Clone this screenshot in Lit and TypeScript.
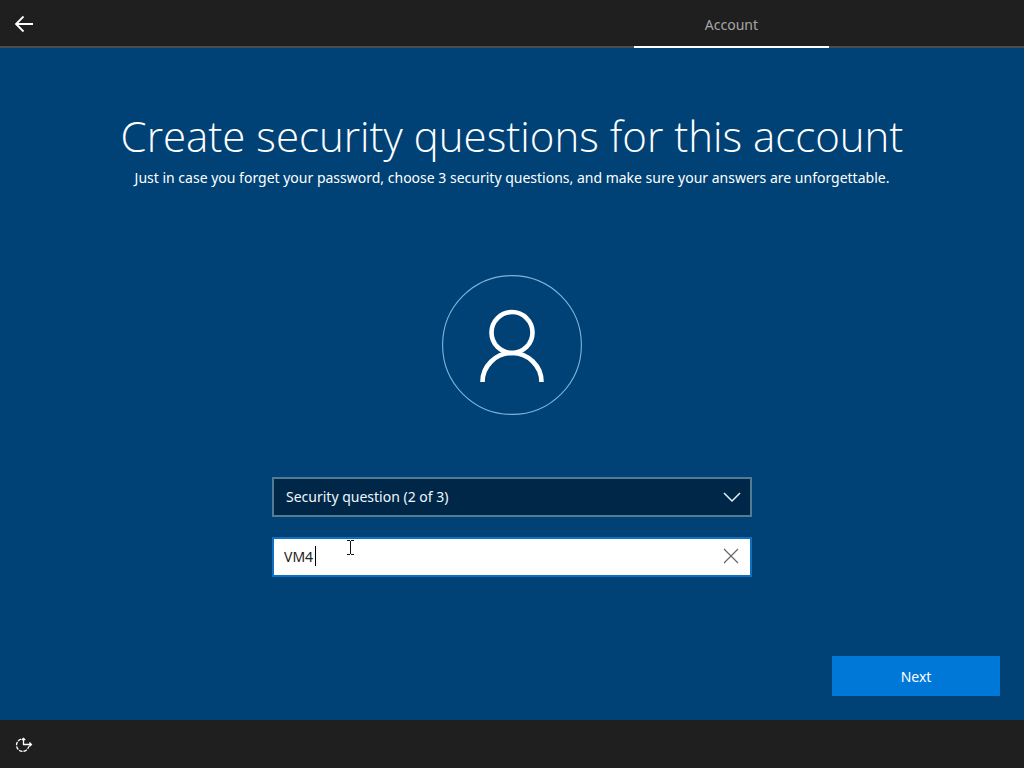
import { LitElement, html, css, svg } from "lit";
import { customElement, state } from "lit/decorators.js";

const backIcon = svg`<svg class="icon" width="20" height="20" viewBox="0 0 20 20" aria-hidden="true">
  <path d="M19 10H2M9.5 2.5L2 10l7.5 7.5" fill="none" stroke="#fff" stroke-width="1.8"/></svg>`;

const personIcon = svg`<svg class="icon" width="140" height="140" viewBox="0 0 140 140" role="img" aria-label="User account">
  <circle cx="70" cy="70" r="69.4" fill="none" stroke="#7fb4dc" stroke-width="1.1"/>
  <g fill="none" stroke="#fff" stroke-width="4.6">
    <circle cx="70" cy="57.5" r="20.5"/>
    <path d="M40.5 107a29.5 29 0 0 1 59 0"/>
  </g></svg>`;

const chevronIcon = svg`<svg class="chevron" width="18" height="12" viewBox="0 0 18 12" aria-hidden="true">
  <path d="M1 2l8 8 8-8" fill="none" stroke="#e4f2fa" stroke-width="1.5"/></svg>`;

const clearIcon = svg`<svg class="icon" width="16" height="16" viewBox="0 0 16 16" aria-hidden="true">
  <path d="M1 1l14 14M15 1l-14 14" fill="none" stroke="#666" stroke-width="1.2"/></svg>`;

const easeIcon = svg`<svg class="icon" width="18" height="18" viewBox="0 0 18 18" aria-hidden="true">
  <g fill="none" stroke="#fff" stroke-width="1.3">
    <path d="M6.2 4.1A6.2 6.2 0 1 0 13.8 11.3" stroke-dasharray="3.6 1"/>
    <path d="M8.5 10V3.5M6.8 5l1.7-1.7L10.2 5M8 9.5H16.4M14.4 7.5l2 2-2 2"/>
  </g></svg>`;

const pointerIcon = svg`<svg class="pointer" width="9" height="17" viewBox="0 0 9 17" aria-hidden="true">
  <path d="M1 1.5h3M5 1.5h3M4.5 2v13M1 15.5h3M5 15.5h3" fill="none" stroke="#111" stroke-width="1"/></svg>`;

@customElement("app-root")
export class AppRoot extends LitElement {
  @state() private answer = "VM4";

  static styles = css`
    :host {
      display: flex;
      flex-direction: column;
      min-height: 100vh;
      background: #004275;
      color: #fff;
      font-family: "Segoe UI", "Noto Sans", "Open Sans", sans-serif;
      font-size: 14px;
      line-height: 20px;
    }
    * { box-sizing: border-box; }
    button, input, select {
      font: inherit;
      color: inherit;
      border: 0;
      border-radius: 0;
      margin: 0;
      padding: 0;
      background: none;
      outline: none;
    }
    .icon { display: block; }
    .top {
      display: grid;
      grid-template-columns: 3.25fr 1fr 1fr;
      height: 48px;
      background: #1f1f1f;
      box-shadow: inset 0 -2px #4c4c4c;
    }
    .back {
      justify-self: start;
      width: 48px;
      height: 48px;
      display: grid;
      place-items: center;
    }
    .tab {
      display: grid;
      place-items: center;
      padding-top: 4px;
      border-bottom: 2px solid #fff;
      color: #a6a6a6;
      text-decoration: none;
    }
    main {
      flex: 1;
      display: flex;
      flex-direction: column;
      align-items: center;
      padding: 56px 24px 24px;
    }
    h1 {
      margin: 0;
      font-family: "Segoe UI", "Open Sans", sans-serif;
      font-size: 42px;
      line-height: 64px;
      font-weight: 300;
      text-align: center;
    }
    .lead { margin: 0; text-align: center; }
    .avatar { margin: 87px 0 62px; }
    form {
      flex: 1;
      width: 100%;
      display: flex;
      flex-direction: column;
      align-items: center;
      gap: 20px;
    }
    .field {
      position: relative;
      width: 100%;
      max-width: 480px;
      height: 40px;
    }
    .question {
      appearance: none;
      width: 100%;
      height: 100%;
      padding: 0 40px 0 12px;
      border: 2px solid #527b94;
      background: #002748;
      color: #eef8fd;
    }
    .chevron {
      position: absolute;
      right: 11px;
      top: 14px;
      pointer-events: none;
    }
    .answer {
      width: 100%;
      height: 100%;
      padding: 0 40px 2px 10px;
      border: 2px solid #0f6fc0;
      background: #fff;
      color: #222;
    }
    .clear {
      position: absolute;
      right: 2px;
      top: 2px;
      width: 38px;
      height: 34px;
      display: grid;
      place-items: center;
    }
    .caret {
      position: absolute;
      left: 43px;
      top: 9px;
      width: 1px;
      height: 20px;
      background: #000;
    }
    .pointer {
      position: absolute;
      left: 74px;
      top: 2px;
      pointer-events: none;
    }
    .next {
      align-self: flex-end;
      margin-top: auto;
      width: 168px;
      height: 40px;
      padding-top: 2px;
      background: #0078d7;
    }
    footer {
      height: 48px;
      background: #1f1f1f;
    }
    .ease {
      width: 48px;
      height: 48px;
      display: grid;
      place-items: center;
    }
  `;

  render() {
    return html`
      <header class="top">
        <button class="back" type="button" aria-label="Back">${backIcon}</button>
        <a class="tab" href="#account" aria-current="step">Account</a>
      </header>
      <main>
        <h1>Create security questions for this account</h1>
        <p class="lead">Just in case you forget your password, choose 3 security questions, and make sure your answers are unforgettable.</p>
        <div class="avatar">${personIcon}</div>
        <form @submit=${(e: Event) => e.preventDefault()}>
          <div class="field">
            <select class="question" aria-label="Security question">
              <option>Security question (2 of 3)</option>
            </select>
            ${chevronIcon}
          </div>
          <div class="field">
            <input class="answer" type="text" aria-label="Your answer" .value=${this.answer}
              @input=${(e: Event) => { this.answer = (e.target as HTMLInputElement).value; }} />
            <span class="caret"></span>
            ${pointerIcon}
            <button class="clear" type="button" aria-label="Clear answer" @click=${() => { this.answer = ""; }}>${clearIcon}</button>
          </div>
          <button class="next" type="submit">Next</button>
        </form>
      </main>
      <footer>
        <button class="ease" type="button" aria-label="Ease of access">${easeIcon}</button>
      </footer>
    `;
  }
}
